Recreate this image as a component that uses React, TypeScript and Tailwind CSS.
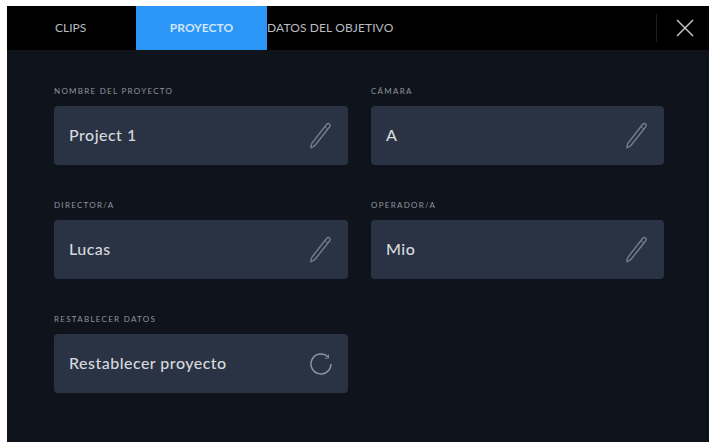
const sans = "font-['Lato','Noto_Sans',sans-serif]";

function PencilIcon() {
  return (
    <svg width="26" height="28" viewBox="0 0 26 28" fill="none" stroke="#747d8b" strokeWidth="1.4" className="shrink-0">
      <path d="M19.5 2.5c.9-1 2.2-1.2 3-.5s.8 2 0 3L8.5 22.8c-.7.9-1.4 1.5-2.3 1.9l-2.2.9.3-2.4c.1-1 .5-1.9 1.2-2.7z" />
      <path d="M17.8 4.7l3.2 2.5" strokeWidth="1" />
    </svg>
  );
}

function ResetIcon() {
  return (
    <svg width="24" height="24" viewBox="0 0 24 24" fill="none" stroke="#8f96a2" strokeWidth="1.5" className="shrink-0">
      <path d="M18.8 4.6A10 10 0 1 0 22 12" />
      <path d="M19.4 2.6l.2 3.4-3.2.2" strokeWidth="0.9" />
    </svg>
  );
}

function Field({ label, value, icon }: { label: string; value: string; icon: React.ReactNode }) {
  return (
    <div className="flex flex-col">
      <div className="h-[11px] whitespace-nowrap text-[8px] leading-[11px] tracking-[0.16em] text-[#8f949d] uppercase">{label}</div>
      <div className="mt-[9px] flex h-[59px] items-center justify-between rounded-[4px] bg-[#2a3343] pl-[15px] pr-[15px]">
        <span className="pb-[2px] text-[16px] font-medium tracking-[0.03em] text-[#d6d9de]">{value}</span>
        {icon}
      </div>
    </div>
  );
}

export default function App() {
  return (
    <div className={`h-[442px] w-[709px] overflow-hidden bg-white pl-[7px] pt-[6px] ${sans}`}>
      <div className="flex h-[436px] flex-col bg-[#0f131c]">
        <div className="flex h-[44px] items-stretch bg-black text-[12px] text-[#b9bcc1]">
          <div className="flex w-[129px] items-center pl-[48px]">CLIPS</div>
          <div className="flex w-[131px] items-center justify-center bg-[#2b96f8] font-bold text-[#cfe6fb]">PROYECTO</div>
          <div className="flex flex-1 items-center tracking-[0.01em]">DATOS DEL OBJETIVO</div>
          <div className="my-[8px] w-px bg-[#1d1f23]" />
          <div className="flex w-[52px] items-center justify-center pl-[4px]">
            <svg width="20" height="20" viewBox="0 0 20 20" stroke="#c2c4c6" strokeWidth="1.5" fill="none">
              <path d="M2 2l16 16M18 2L2 18" />
            </svg>
          </div>
        </div>
        <div className="grid grid-cols-[294px_293px] gap-x-[23px] gap-y-[35px] pl-[47px] pr-[38px] pt-[36px]">
          <Field label="Nombre del proyecto" value="Project 1" icon={<PencilIcon />} />
          <Field label="Cámara" value="A" icon={<PencilIcon />} />
          <Field label="Director/a" value="Lucas" icon={<PencilIcon />} />
          <Field label="Operador/a" value="Mio" icon={<PencilIcon />} />
          <Field label="Restablecer datos" value="Restablecer proyecto" icon={<ResetIcon />} />
        </div>
      </div>
    </div>
  );
}
